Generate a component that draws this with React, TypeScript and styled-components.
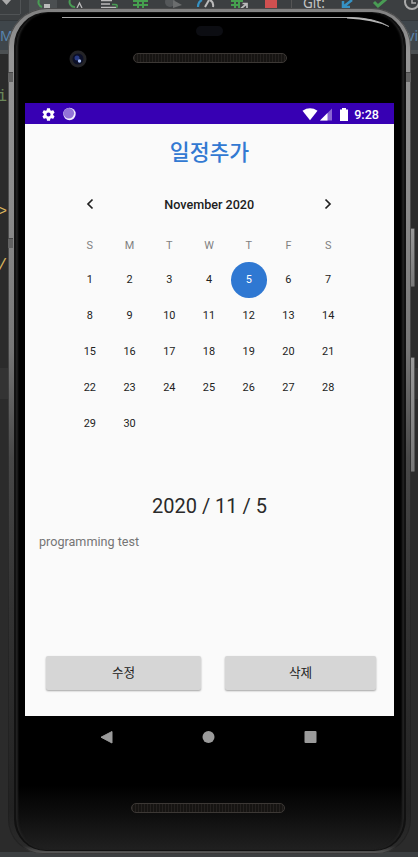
import React from "react";
import styled, { createGlobalStyle } from "styled-components";

const Global = createGlobalStyle`
  * { box-sizing: border-box; }
  html, body { margin: 0; padding: 0; background: #2b2b2b; }
`;

const Desktop = styled.div`
  position: relative;
  width: 418px;
  height: 857px;
  overflow: hidden;
  font-family: Roboto, "Noto Sans CJK KR", sans-serif;
`;

const Ide = styled.div`
  display: flex;
  flex-direction: column;
  height: 100%;
  background: #2b2b2b;
`;

const Toolbar = styled.div`
  height: 20px;
  background: #3c3f41;
  svg { display: block; }
`;

const TabStrip = styled.div`
  display: flex;
  justify-content: space-between;
  align-items: center;
  height: 30px;
  background: #3f464b;
  border-top: 1px solid #33373a;
  color: #5a86b0;
  font: 14px/1 "Noto Sans", sans-serif;
`;

const Rule = styled.div`
  height: 4px;
  background: #4c5052;
`;

const Editor = styled.div`
  flex: 1;
  background: linear-gradient(#2b2b2b 314px, #333333 314px 345px, #2b2b2b 345px);
`;

const CodeText = styled.div<{ $tone: string; $gap: number }>`
  padding-top: ${(p) => p.$gap}px;
  width: 7px;
  display: flex;
  justify-content: flex-end;
  color: ${(p) => p.$tone};
  font: 16px/20px "Liberation Mono", monospace;
`;

const IdeFooter = styled.div`
  height: 5px;
  background: #3c3f41;
`;

const Phone = styled.div`
  position: absolute;
  left: 8px;
  top: 8px;
  width: 403px;
  height: 846px;
  padding: 4px 5px 3px 6px;
  border-radius: 39px 39px 35px 35px;
  background: linear-gradient(#808080 0, #969696 45px, #8b8b8b 200px, #777 340px, #484848 450px, #333 600px, #222 800px, #2a2a2a 838px, #606060 846px);
  box-shadow: inset 0 0 0 1px rgba(30, 30, 30, 0.55);
`;

const Body = styled.div`
  display: flex;
  flex-direction: column;
  height: 100%;
  padding: 0 10px 0 9px;
  border: 2px solid #111;
  border-width: 1px 2px;
  border-radius: 34px 34px 32px 32px;
  background: linear-gradient(#000 772px, #0d0d0d 800px, #202020 837px);
  box-shadow: inset 3px 0 2px -1px #222, inset -3px 0 2px -1px #222;
`;

const TopBezel = styled.div`
  position: relative;
  display: flex;
  flex-direction: column;
  align-items: center;
  height: 90px;
`;

const Glint = styled.svg`
  position: absolute;
  left: 36px;
  top: 1px;
`;

const Sensor = styled.div`
  width: 27px;
  height: 10px;
  margin-top: 13px;
  border-radius: 5px;
  background: #0c0d12;
`;

const Speaker = styled.div`
  width: 154px;
  height: 10px;
  flex: none;
  border: 1px solid #3c3835;
  border-radius: 5px;
  background: repeating-linear-gradient(90deg, #24211f 0 1px, #161412 1px 3px);
`;

const TopSpeaker = styled(Speaker)`
  margin-top: 17px;
`;

const Camera = styled.svg`
  position: absolute;
  left: 44px;
  top: 37px;
`;

const Screen = styled.main`
  display: flex;
  flex-direction: column;
  flex: none;
  width: 369px;
  height: 613px;
  background: #fafafa;
`;

const StatusBar = styled.div`
  display: flex;
  align-items: center;
  flex: none;
  height: 21px;
  padding: 1px 15px 0 17px;
  background: #3700b3;
  color: #fff;
  font-size: 12.6px;
  font-weight: 500;
  svg { flex: none; }
`;

const Spacer = styled.div`
  flex: 1;
`;

const Title = styled.h1`
  margin: 13px 0 0;
  text-align: center;
  color: #3279d2;
  font: 500 21.6px/32px Roboto, "Noto Sans CJK KR", sans-serif;
`;

const MonthBar = styled.div`
  display: flex;
  align-items: center;
  justify-content: space-between;
  width: 278px;
  height: 24px;
  margin: 23px 0 0 45px;
  padding: 0 11.5px 0 12px;
  color: #202020;
  font-size: 12.6px;
  font-weight: 500;
`;

const Week = styled.div`
  display: grid;
  grid-template-columns: repeat(7, 1fr);
  width: 278px;
  margin: 20px 0 0 45px;
  line-height: 20px;
  text-align: center;
  color: #808080;
  font-size: 10.9px;
`;

const Days = styled.div`
  display: grid;
  grid-template-columns: repeat(7, 1fr);
  grid-auto-rows: 35.9px;
  place-items: center;
  width: 278px;
  height: 179px;
  margin: 6px 0 0 45px;
`;

const Day = styled.div<{ $selected?: boolean }>`
  width: 35.6px;
  height: 35.6px;
  border-radius: 50%;
  text-align: center;
  line-height: 36px;
  font-size: 10.9px;
  color: ${(p) => (p.$selected ? "#fff" : "#222")};
  background: ${(p) => (p.$selected ? "#2f78d2" : "transparent")};
`;

const DateText = styled.div`
  margin-top: 49px;
  text-align: center;
  color: #2a2a2a;
  font-size: 20px;
  line-height: 32px;
`;

const Note = styled.div`
  padding-left: 14px;
  margin-top: 10px;
  line-height: 20px;
  color: #757575;
  font-size: 12.6px;
`;

const Actions = styled.div`
  display: flex;
  justify-content: space-between;
  margin: auto 18px 26px 21px;
`;

const Button = styled.button<{ $width: number }>`
  width: ${(p) => p.$width}px;
  height: 34px;
  padding: 0;
  border: 0;
  border-radius: 2px;
  background: #d6d6d6;
  box-shadow: 0 1px 2px rgba(0, 0, 0, 0.35);
  color: #222;
  font: 400 12.6px/1 Roboto, "Noto Sans CJK KR", sans-serif;
`;

const NavBar = styled.div`
  display: flex;
  justify-content: space-between;
  padding: 14px 77px 0 75px;
  height: 87px;
`;

const BottomSpeaker = styled(Speaker)`
  align-self: center;
  margin-right: 4px;
`;

const SideKey = styled.div<{ $top: number; $height: number }>`
  position: absolute;
  left: 410px;
  top: ${(p) => p.$top}px;
  width: 5px;
  height: ${(p) => p.$height}px;
  border: 1px solid #555;
  border-radius: 1px;
  background: linear-gradient(#999, #777);
`;

const Antenna = styled.div<{ $left: number; $top: number }>`
  position: absolute;
  left: ${(p) => p.$left}px;
  top: ${(p) => p.$top}px;
  width: 5px;
  height: 10px;
  background: #626262;
  border-top: 1px solid #484848;
`;

const days = Array.from({ length: 30 }, (_, i) => i + 1);

const IdeIcons = () => (
  <svg width="418" height="20" viewBox="0 0 418 20" fill="none">
    <path d="M20.500 0V14M0 14.500H20" stroke="#505355" />
    <path d="M2 0h9l-4.500 5z" fill="#aaa" />
    <rect x="29" y="0" width="28" height="12" fill="#4b4f51" />
    <path d="M39 0a5 5 0 0 0 3 7M70 0a5 5 0 0 0 5 7" stroke="#499c54" strokeWidth="2" />
    <rect x="44" y="4" width="6" height="4.500" fill="#bbb" />
    <path d="M77 8l2.500-5 2.500 5" stroke="#bbb" strokeWidth="1.300" />
    <path d="M101 .5h11M101 4h9M101 7.500h15" stroke="#bbb" strokeWidth="1.700" />
    <path d="M112 4.500h3q3.500 0 1.500 3.500" stroke="#499c54" strokeWidth="1.500" />
    <path d="M133 1h15M133 5h15M138 0v8M143 0v8" stroke="#46a04f" strokeWidth="2" />
    <circle cx="170" cy="2" r="5" fill="#55585a" /><path d="M173 0l9 5-9 3z" fill="#6b6d6e" />
    <path d="M198 7q0-5 4-7" stroke="#3592c4" strokeWidth="2.200" /><path d="M205 7l4-7M210 0q4 2 3 7" stroke="#bbb" strokeWidth="2" />
    <path d="M231 1h12M231 5h9M235 0v8M239 0v8" stroke="#46a04f" strokeWidth="2" /><path d="M241 8.500l6-5M242.500 3.500h4.500v4.500" stroke="#bbb" strokeWidth="1.700" />
    <rect x="265" y="0" width="12" height="8" fill="#d05050" />
    <path d="M291.500 0v9" stroke="#555" />
    <path d="M352 0l-9 7M343 1v6h7" stroke="#3592c4" strokeWidth="2.500" />
    <path d="M374 2l4 4 8-7" stroke="#499c54" strokeWidth="3" />
    <circle cx="412" cy="2" r="7" stroke="#aaa" strokeWidth="2" /><path d="M412 0v3h4" stroke="#aaa" strokeWidth="1.500" />
    <text x="303" y="8" fill="#c4c4c4" fontSize="13.500" fontFamily="Noto Sans">Git:</text>
  </svg>
);

export default function App() {
  return (
    <>
      <Global />
      <Desktop>
        <Ide>
          <Toolbar><IdeIcons /></Toolbar>
          <TabStrip><span>M</span><span>vi</span></TabStrip>
          <Rule />
          <Editor>
            <CodeText $tone="#6a8759" $gap={33}>i</CodeText>
            <CodeText $tone="#d9b45f" $gap={95}>&gt;</CodeText>
            <CodeText $tone="#d9b45f" $gap={34}>/</CodeText>
          </Editor>
          <IdeFooter />
        </Ide>
        <SideKey $top={228} $height={59} />
        <SideKey $top={357} $height={115} />
        <Phone>
          <Body>
            <TopBezel>
              <Glint width="340" height="18" viewBox="0 0 340 18">
                <path d="M1 3.500H290Q314 4 328 12.500" fill="none" stroke="#a8a8a8" strokeWidth="1" />
                <path d="M286 3Q312 3 328.500 13Q312 5.500 286 4.500z" fill="#b8b8b8" />
              </Glint>
              <Sensor />
              <TopSpeaker />
              <Camera width="18" height="18" viewBox="0 0 18 18">
                <circle cx="9" cy="9" r="8.500" fill="#242427" />
                <circle cx="9" cy="9" r="5.500" fill="#0c1028" />
                <circle cx="8" cy="8" r="2.500" fill="#273a83" />
                <circle cx="10.500" cy="11" r="1.700" fill="#a9c0f5" />
              </Camera>
            </TopBezel>
            <Screen>
              <StatusBar>
                <svg width="13" height="13" viewBox="2 2 20 20">
                  <path fill="#fff" d="M19.140 12.940c.040-.300.060-.610.060-.940 0-.320-.020-.640-.070-.940l2.030-1.580a.490.490 0 0 0 .120-.610l-1.920-3.320a.488.488 0 0 0-.590-.220l-2.390.960c-.500-.380-1.030-.700-1.620-.940l-.360-2.540a.484.484 0 0 0-.480-.410h-3.840c-.240 0-.430.170-.470.410l-.360 2.540c-.590.240-1.130.570-1.620.940l-2.390-.960c-.220-.080-.470 0-.590.220L2.740 8.870c-.120.210-.080.470.120.610l2.030 1.580c-.050.300-.090.630-.090.940s.020.640.070.940l-2.030 1.580a.490.490 0 0 0-.120.610l1.920 3.320c.120.220.370.290.590.220l2.390-.960c.500.380 1.030.700 1.620.940l.360 2.540c.050.240.240.410.480.410h3.840c.240 0 .440-.170.470-.410l.360-2.540c.590-.240 1.130-.560 1.620-.940l2.390.960c.220.080.470 0 .590-.220l1.920-3.320c.120-.220.070-.470-.120-.610l-2.010-1.580zM12 15.200A3.200 3.200 0 1 1 12 8.800a3.200 3.200 0 0 1 0 6.400z" />
                </svg>
                <svg width="24" height="14" viewBox="0 0 24 14">
                  <circle cx="14.500" cy="7" r="6.200" fill="#f1ebff" />
                  <circle cx="13.800" cy="6.300" r="5.300" fill="#9372d8" />
                </svg>
                <Spacer />
                <svg width="52" height="15" viewBox="0 0 52 15">
                  <path d="M0.500 3.700Q8 -1 15.500 3.700L8 13.300z" fill="#fff" />
                  <path d="M30 1.500V13.500H18z" fill="#8a65d2" />
                  <path d="M25.500 6v7.500H18z" fill="#fff" />
                  <path d="M38 2.500h2V1h4v1.500h2v11.500h-8z" fill="#fff" />
                </svg>
                <span>9:28</span>
              </StatusBar>
              <Title>일정추가</Title>
              <MonthBar>
                <svg width="16" height="16" viewBox="0 0 16 16" fill="none" stroke="#202020" strokeWidth="1.700"><path d="M10.500 3.500 6 8l4.500 4.500" /></svg>
                <span>November 2020</span>
                <svg width="16" height="16" viewBox="0 0 16 16" fill="none" stroke="#202020" strokeWidth="1.700"><path d="M5.500 3.500 10 8l-4.500 4.500" /></svg>
              </MonthBar>
              <Week>{["S", "M", "T", "W", "T", "F", "S"].map((d, i) => <span key={i}>{d}</span>)}</Week>
              <Days>{days.map((d) => <Day key={d} $selected={d === 5}>{d}</Day>)}</Days>
              <DateText>2020 / 11 / 5</DateText>
              <Note>programming test</Note>
              <Actions>
                <Button $width={155}>수정</Button>
                <Button $width={151}>삭제</Button>
              </Actions>
            </Screen>
            <NavBar>
              <svg width="13" height="14" viewBox="0 0 13 14"><path d="M12 1.500v11.500L1 7.200z" fill="#9b9b9b" stroke="#9b9b9b" strokeLinejoin="round" /></svg>
              <svg width="13" height="14" viewBox="0 0 13 14"><circle cx="6.500" cy="7" r="6" fill="#9b9b9b" /></svg>
              <svg width="13" height="14" viewBox="0 0 13 14"><rect x="0.500" y="1" width="12" height="12" rx="1" fill="#9b9b9b" /></svg>
            </NavBar>
            <BottomSpeaker />
          </Body>
        </Phone>
        <Antenna $left={8} $top={72} />
        <Antenna $left={8} $top={238} />
        <Antenna $left={406} $top={72} />
      </Desktop>
    </>
  );
}
